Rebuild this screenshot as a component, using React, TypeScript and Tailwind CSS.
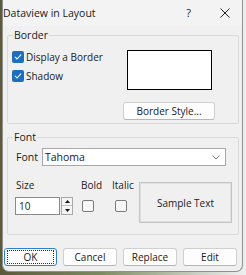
import React from 'react'

const font = "font-['Open_Sans','Segoe_UI',Roboto,sans-serif]"

function Check({ checked }: { checked: boolean }) {
  if (checked) {
    return (
      <span className="flex h-[12px] w-[12px] shrink-0 items-center justify-center rounded-[2px] bg-[#1a6fc4]">
        <svg width="8" height="8" viewBox="0 0 8 8">
          <path d="M1.2 4.2 L3.1 6 L6.8 1.8" fill="none" stroke="#fff" strokeWidth="1.1" strokeLinecap="round" strokeLinejoin="round" />
        </svg>
      </span>
    )
  }
  return <span className="block h-[12px] w-[12px] shrink-0 rounded-[2px] border border-[#7a7a7a] bg-[#f7f7f7]" />
}

function Btn({ label, focus = false, w = 'w-[53px]' }: { label: string; focus?: boolean; w?: string }) {
  return (
    <div
      className={`${w} flex h-[18px] items-center justify-center rounded-[3px] border bg-[#fdfdfd] text-[#1a1a1a] ${
        focus ? 'border-[#2f7fd0]' : 'border-[#d0d0d0] border-b-[#b5b5b5]'
      }`}
    >
      {focus ? (
        <div className="flex h-[14px] w-[calc(100%-4px)] items-center justify-center border border-dotted border-[#333]">
          {label}
        </div>
      ) : (
        label
      )}
    </div>
  )
}

export default function App() {
  return (
    <div className={`h-[275px] w-[246px] overflow-hidden bg-[linear-gradient(90deg,#5b5a3c,#7b8a5c_40%,#c9cfc4_80%,#eef0f0)] ${font} text-[10px] leading-[16px] text-[#1a1a1a]`}>
      <div className="ml-[2px] flex h-[272px] w-[241px] flex-col rounded-b-[7px] border border-t-0 border-[#8f8f8f] bg-[#f0f0f0]">
        {/* title bar */}
        <div className="flex h-[26px] items-center bg-[#f3f3f3] pb-[1px]">
          <span className="text-[10.5px]">Dataview in Layout</span>
          <span className="ml-auto mr-[29px] text-[11px]">?</span>
          <svg width="10" height="10" viewBox="0 0 10 10" className="mr-[12px]">
            <path d="M0.5 0.5 L9.5 9.5 M9.5 0.5 L0.5 9.5" stroke="#222" strokeWidth="1" />
          </svg>
        </div>

        {/* Border group */}
        <fieldset className="ml-[4px] mt-[1px] w-[232px] rounded-[2px] border border-[#d9d9d9] pb-[3px]">
          <legend className="ml-[5px] px-[1px] text-[10.5px] leading-[16px]">Border</legend>
          <div className="flex pl-[4px]">
            <div className="flex w-[111px] flex-col pt-[4px]">
              <div className="flex h-[19px] items-center gap-[2px]">
                <Check checked />
                <span>Display a Border</span>
              </div>
              <div className="flex h-[19px] items-center gap-[2px]">
                <Check checked />
                <span>Shadow</span>
              </div>
            </div>
            <div className="flex w-[92px] flex-col items-center">
              <div className="mt-[7px] h-[40px] w-[85px] border border-black bg-white" />
              <div className="mt-[12px]">
                <Btn label="Border Style..." w="w-[92px]" />
              </div>
            </div>
          </div>
        </fieldset>

        {/* Font group */}
        <fieldset className="ml-[4px] mt-[5px] w-[232px] rounded-[2px] border border-[#d9d9d9] pb-[11px]">
          <legend className="ml-[5px] px-[1px] text-[10.5px] leading-[16px]">Font</legend>
          <div className="mt-[3px] flex items-center pl-[8px]">
            <span className="w-[26px] text-[10.5px]">Font</span>
            <div className="flex h-[18px] w-[184px] items-center border border-[#a8a8a8] bg-white pl-[2px] text-[10.5px]">
              <span>Tahoma</span>
              <svg width="8" height="5" viewBox="0 0 8 5" className="ml-auto mr-[5px]">
                <path d="M0.5 0.5 L4 4 L7.5 0.5" fill="none" stroke="#777" strokeWidth="1" />
              </svg>
            </div>
          </div>

          <div className="mt-[11px] flex items-start pl-[7px]">
            <div className="flex w-[66px] flex-col">
              <span className="pl-[1px]">Size</span>
              <div className="mt-[4px] flex">
                <div className="flex h-[18px] w-[45px] items-center border border-[#8a8a8a] bg-white pl-[3px]">10</div>
                <div className="ml-[1px] flex h-[18px] w-[12px] flex-col border border-[#a8a8a8] bg-[#f4f4f4]">
                  <div className="flex h-[8px] items-center justify-center border-b border-[#c0c0c0]">
                    <svg width="5" height="3" viewBox="0 0 5 3"><path d="M0 3 L2.5 0 L5 3 Z" fill="#111" /></svg>
                  </div>
                  <div className="flex flex-1 items-center justify-center">
                    <svg width="5" height="3" viewBox="0 0 5 3"><path d="M0 0 L2.5 3 L5 0 Z" fill="#111" /></svg>
                  </div>
                </div>
              </div>
            </div>
            <div className="flex w-[31px] flex-col">
              <span>Bold</span>
              <div className="mt-[7px] pl-[1px]">
                <Check checked={false} />
              </div>
            </div>
            <div className="flex w-[27px] flex-col">
              <span>Italic</span>
              <div className="mt-[7px] pl-[3px]">
                <Check checked={false} />
              </div>
            </div>
            <div className="mt-[5px] flex h-[41px] w-[93px] items-center justify-center border border-[#c4c4c4] shadow-[inset_0_0_0_1px_#e0e0e0]">
              Sample Text
            </div>
          </div>
        </fieldset>

        {/* buttons */}
        <div className="mt-[13px] flex gap-[6px] pl-[1px]">
          <Btn label="OK" focus w="w-[53px]" />
          <Btn label="Cancel" w="w-[54px]" />
          <Btn label="Replace" w="w-[54px]" />
          <Btn label="Edit" w="w-[54px]" />
        </div>
      </div>
    </div>
  )
}
